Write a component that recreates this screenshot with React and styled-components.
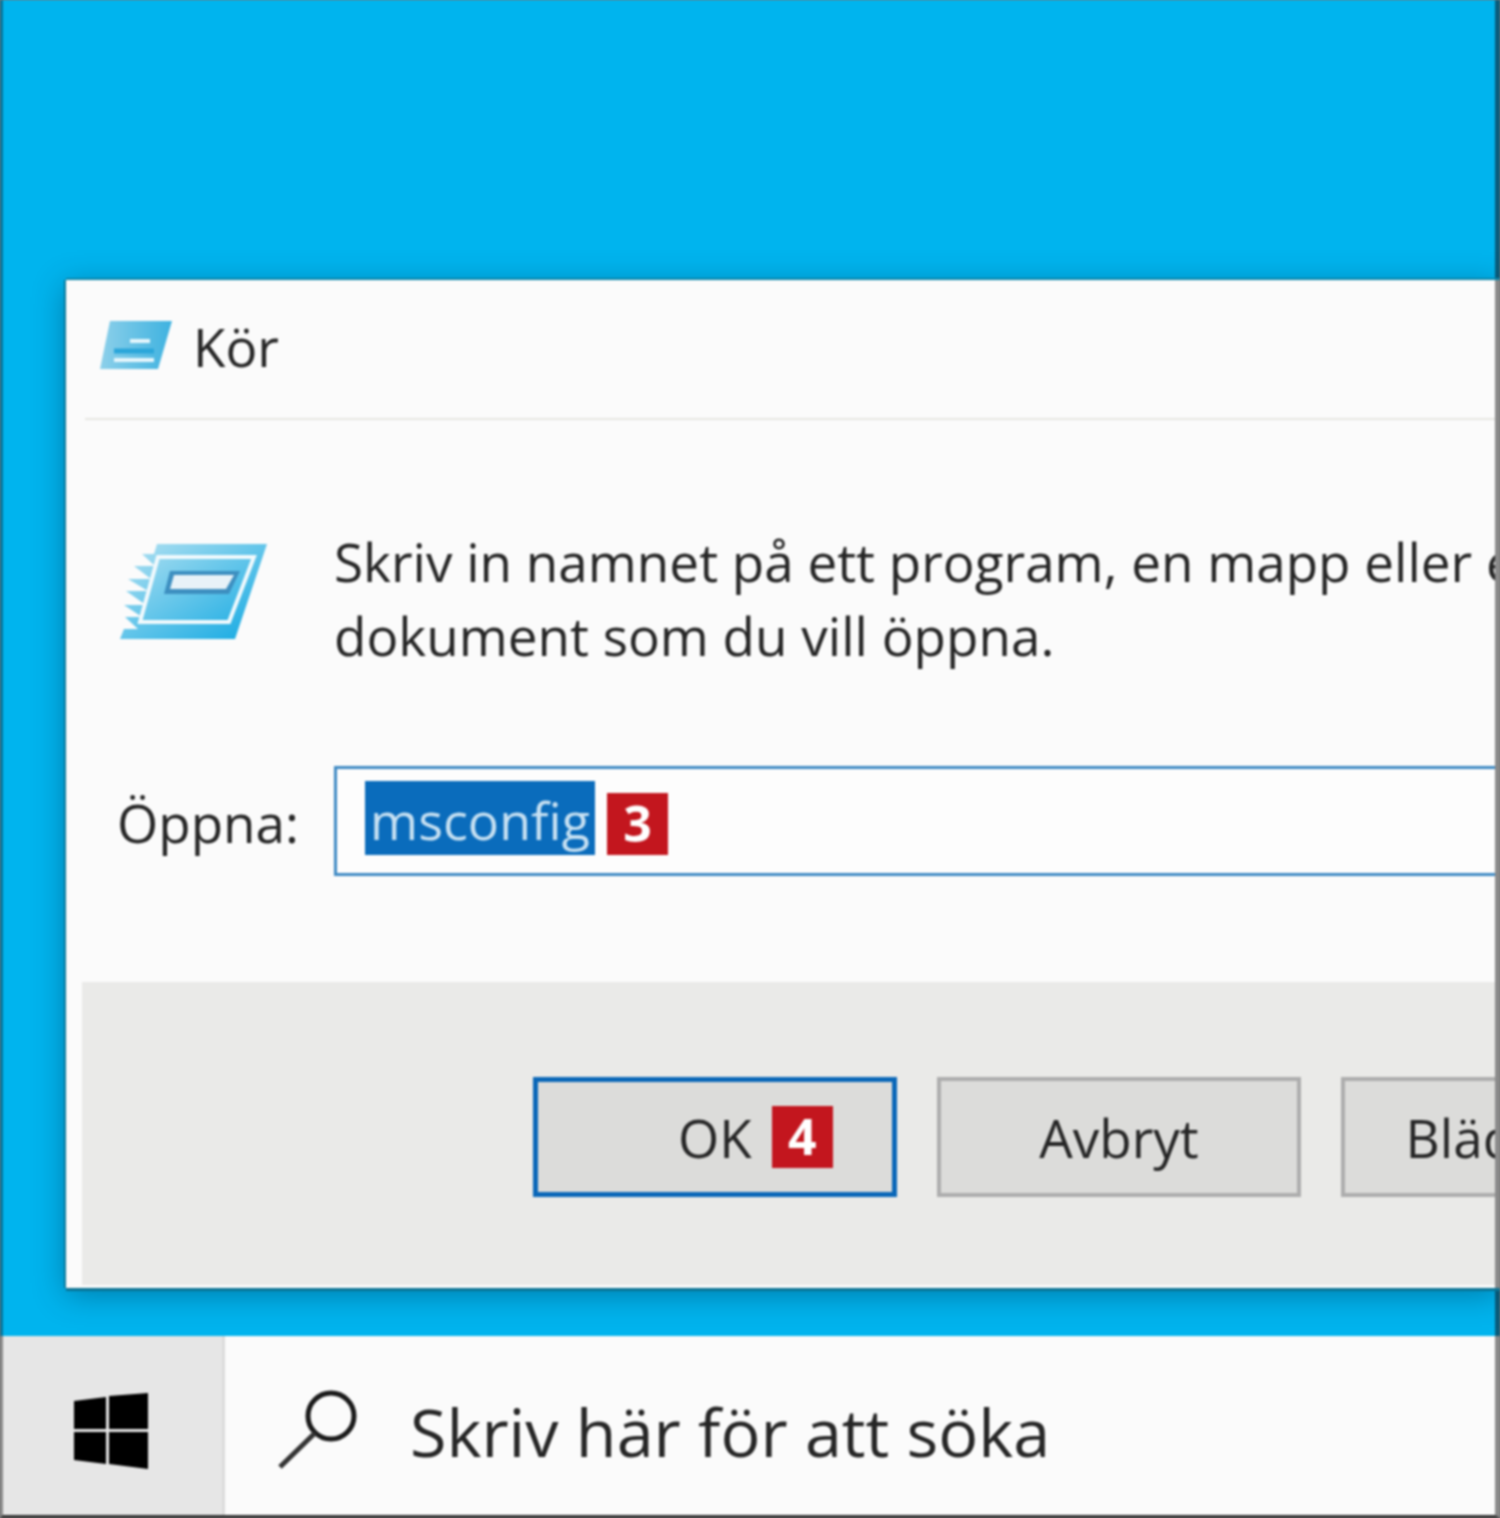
import React from "react";
import styled, { createGlobalStyle } from "styled-components";

const GlobalStyle = createGlobalStyle`
  html, body {
    margin: 0;
    padding: 0;
    background: #777;
  }
  body {
    font-family: "Open Sans", "Noto Sans", sans-serif;
    color: #262626;
  }
`;

const Page = styled.div`
  width: 1500px;
  height: 1518px;
  display: flex;
  flex-direction: column;
  overflow: hidden;
  filter: blur(1px);
`;

const Desktop = styled.div`
  height: 1336px;
  flex: none;
  box-sizing: border-box;
  padding: 280px 0 48px 66px;
  overflow: hidden;
  background: linear-gradient(
    to right,
    #08749a 3px,
    #00b4ee 3px,
    #00b4ee 1495px,
    #0b5c7a 1495px
  );
`;

const Dialog = styled.div`
  height: 1008px;
  background: #fbfbfb;
  border-right: 5px solid #8a8a8a;
  box-shadow: -2px 0 0 #0a7a9c, 0 -2px 0 #0a86aa, 0 3px 0 #0a7394,
    0 6px 30px rgba(0, 50, 80, 0.45);
  display: flex;
  flex-direction: column;
  overflow: hidden;
`;

const TitleBar = styled.div`
  height: 140px;
  margin-left: 19px;
  border-bottom: 2px solid #e6e6e2;
  display: flex;
  align-items: center;
  gap: 21px;
  padding: 0 0 6px 15px;
  flex: none;
  box-sizing: border-box;
  font-size: 53px;
`;

const Message = styled.div`
  height: 346px;
  flex: none;
  display: flex;
  padding: 105px 0 0 52px;
  gap: 66px;
  box-sizing: border-box;
`;

const MessageText = styled.div`
  font-size: 53px;
  line-height: 74px;
  white-space: nowrap;
`;

const OpenRow = styled.div`
  height: 216px;
  flex: none;
  display: flex;
  padding-left: 51px;
  gap: 35px;
  box-sizing: border-box;
`;

const OpenLabel = styled.div`
  font-size: 53px;
  line-height: 114px;
`;

const InputBox = styled.div`
  height: 110px;
  flex: 1;
  border: 3px solid #3f8ac4;
  border-right: none;
  box-sizing: border-box;
  display: flex;
  align-items: flex-end;
  gap: 12px;
  padding: 0 0 18px 28px;
  background: #fdfdfd;
`;

const Selected = styled.span`
  width: 230px;
  height: 74px;
  background: #0a6cbc;
  color: #c6e0f2;
  font-size: 52px;
  line-height: 78px;
  text-align: center;
  white-space: nowrap;
  overflow: hidden;
`;

const Badge = styled.span`
  width: 61px;
  height: 62px;
  flex: none;
  background: #c3161e;
  color: #fff;
  font-weight: 700;
  font-size: 50px;
  line-height: 60px;
  text-align: center;
`;

const Footer = styled.div`
  flex: 1;
  margin: 0 0 3px 16px;
  background: #eaeae8;
  display: flex;
  gap: 40px;
  padding: 95px 0 0 451px;
`;

const Button = styled.div`
  width: 364px;
  height: 120px;
  flex: none;
  box-sizing: border-box;
  background: #dcdcda;
  border: ${(p) => (p.$primary ? "5px solid #0a67b8" : "4px solid #adadad")};
  display: flex;
  align-items: center;
  justify-content: ${(p) => (p.$primary ? "flex-start" : "center")};
  padding-left: ${(p) => (p.$primary ? "140px" : "0")};
  gap: 20px;
  font-size: 53px;
  white-space: nowrap;
`;

const Taskbar = styled.div`
  flex: 1;
  display: flex;
  background: #fbfbfb;
  border-left: 3px solid #8a8a8a;
  border-right: 5px solid #8a8a8a;
  border-bottom: 3px solid #333;
`;

const StartButton = styled.div`
  width: 222px;
  flex: none;
  background: #e6e6e6;
  border-right: 3px solid #dcdcdc;
  box-sizing: border-box;
  display: flex;
  align-items: center;
  padding: 10px 0 0 70px;
`;

const SearchBox = styled.div`
  flex: 1;
  display: flex;
  align-items: center;
  padding: 10px 0 0 50px;
  gap: 51px;
  font-size: 66.5px;
  white-space: nowrap;
`;

const IconLarge = styled.svg`
  flex: none;
  margin-top: 19px;
`;

const IconSmall = styled.svg`
  flex: none;
`;

const IconSearch = styled.svg`
  flex: none;
`;

const RunIconLarge = () => (
  <IconLarge width="150" height="98" viewBox="0 0 150 98">
    <defs>
      <linearGradient id="runBlue" x1="0" y1="0" x2="1" y2="1">
        <stop offset="0" stopColor="#b4e2f2" />
        <stop offset="1" stopColor="#10a8e2" />
      </linearGradient>
    </defs>
    <path
      d="M39 0H149L117 95H2L6 85H20L7 73H24L6 61H28L8 47H30L10 35H33L16 22H37L24 10H36Z"
      fill="url(#runBlue)"
    />
    <path d="M40 13H136L111 78H22Z" fill="none" stroke="#f2fafd" strokeWidth="4" />
    <path d="M52 27H122L111 50H46Z" fill="#3d8fc0" />
    <path d="M56 31H116L108 45H52Z" fill="#e8f2f8" />
  </IconLarge>
);

const RunIconSmall = () => (
  <IconSmall width="72" height="50" viewBox="0 0 72 50">
    <defs>
      <linearGradient id="runBlueSmall" x1="0" y1="0" x2="1" y2="0">
        <stop offset="0" stopColor="#8dd0ea" />
        <stop offset="1" stopColor="#3eb2e0" />
      </linearGradient>
    </defs>
    <path d="M10 0H72L58 48H0Z" fill="url(#runBlueSmall)" />
    <path d="M30 20H50M14 39H54" stroke="#e6f6fc" strokeWidth="4" />
    <path d="M14 30H54" stroke="#2aa6da" strokeWidth="5" />
  </IconSmall>
);

const WindowsLogo = () => (
  <svg width="76" height="76" viewBox="0 0 76 76">
    <path d="M1 8L33 4V36H1ZM36 3L75 0V36H36ZM1 39H33V71L1 67ZM36 39H75V76L36 71Z" fill="#000" />
  </svg>
);

const SearchIcon = () => (
  <IconSearch width="84" height="82" viewBox="0 0 84 82" fill="none">
    <circle cx="56" cy="26" r="23" stroke="#1a1a1a" strokeWidth="5" />
    <path d="M40 43L5 77" stroke="#333" strokeWidth="5" />
  </IconSearch>
);

export default function App() {
  return (
    <>
      <GlobalStyle />
      <Page>
        <Desktop>
          <Dialog>
            <TitleBar>
              <RunIconSmall />
              <span>Kör</span>
            </TitleBar>
            <Message>
              <RunIconLarge />
              <MessageText>
                Skriv in namnet på ett program, en mapp eller ett
                <br />
                dokument som du vill öppna.
              </MessageText>
            </Message>
            <OpenRow>
              <OpenLabel>Öppna:</OpenLabel>
              <InputBox>
                <Selected>msconfig</Selected>
                <Badge>3</Badge>
              </InputBox>
            </OpenRow>
            <Footer>
              <Button $primary>
                <span>OK</span>
                <Badge>4</Badge>
              </Button>
              <Button>Avbryt</Button>
              <Button>Bläddra...</Button>
            </Footer>
          </Dialog>
        </Desktop>
        <Taskbar>
          <StartButton>
            <WindowsLogo />
          </StartButton>
          <SearchBox>
            <SearchIcon />
            <span>Skriv här för att söka</span>
          </SearchBox>
        </Taskbar>
      </Page>
    </>
  );
}
